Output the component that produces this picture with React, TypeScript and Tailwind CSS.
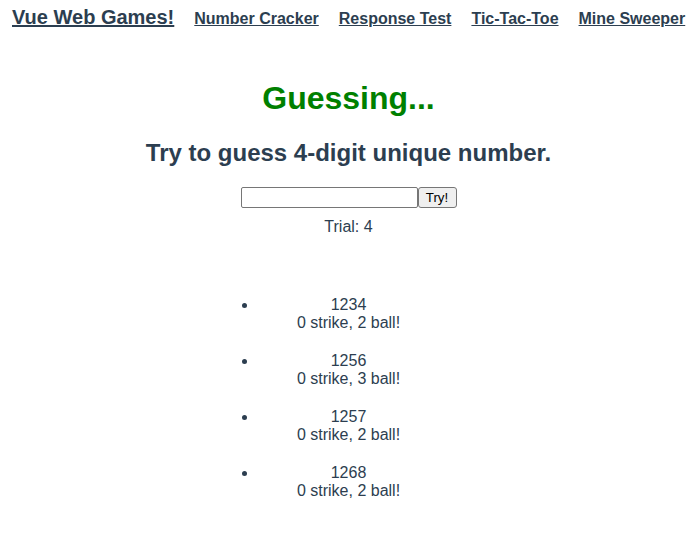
import React from "react";

const links = ["Number Cracker", "Response Test", "Tic-Tac-Toe", "Mine Sweeper"];
const results = [
  { n: "1234", r: "0 strike, 2 ball!" },
  { n: "1256", r: "0 strike, 3 ball!" },
  { n: "1257", r: "0 strike, 2 ball!" },
  { n: "1268", r: "0 strike, 2 ball!" },
];

export default function App() {
  return (
    <div className="min-h-[555px] bg-white font-['Liberation_Sans',Arial,sans-serif] leading-[normal] text-[#2c3e50]">
      <nav className="flex items-baseline gap-5 px-3 pt-[6px]">
        <a href="#" className="text-[20px] font-bold underline">Vue Web Games!</a>
        {links.map((l) => (
          <a key={l} href="#" className="text-base font-bold underline">{l}</a>
        ))}
      </nav>
      <div className="w-[697px] text-center">
        <h1 className="mt-[49px] text-[32px] font-bold leading-[normal] text-[#008000]">Guessing...</h1>
        <h2 className="mt-[22px] text-[24px] font-bold leading-[normal]">Try to guess 4-digit unique number.</h2>
        <div className="mt-[20px] flex justify-center">
          <input className="h-[21px] w-[177px] rounded-[2px] border border-[#767676] bg-white px-[2px] text-[13.33px]" />
          <button className="h-[21px] w-[39px] rounded-[3px] border border-[#767676] bg-[#efefef] text-[13.33px] leading-none text-black">Try!</button>
        </div>
        <div className="mt-[10px] text-base leading-[normal]">Trial: 4</div>
        <ul className="mx-auto mt-[60px] w-[181px] list-disc text-base leading-[normal]">
          {results.map((x) => (
            <li key={x.n} className="mb-[20px]">
              <div>{x.n}</div>
              <div>{x.r}</div>
            </li>
          ))}
        </ul>
      </div>
    </div>
  );
}
